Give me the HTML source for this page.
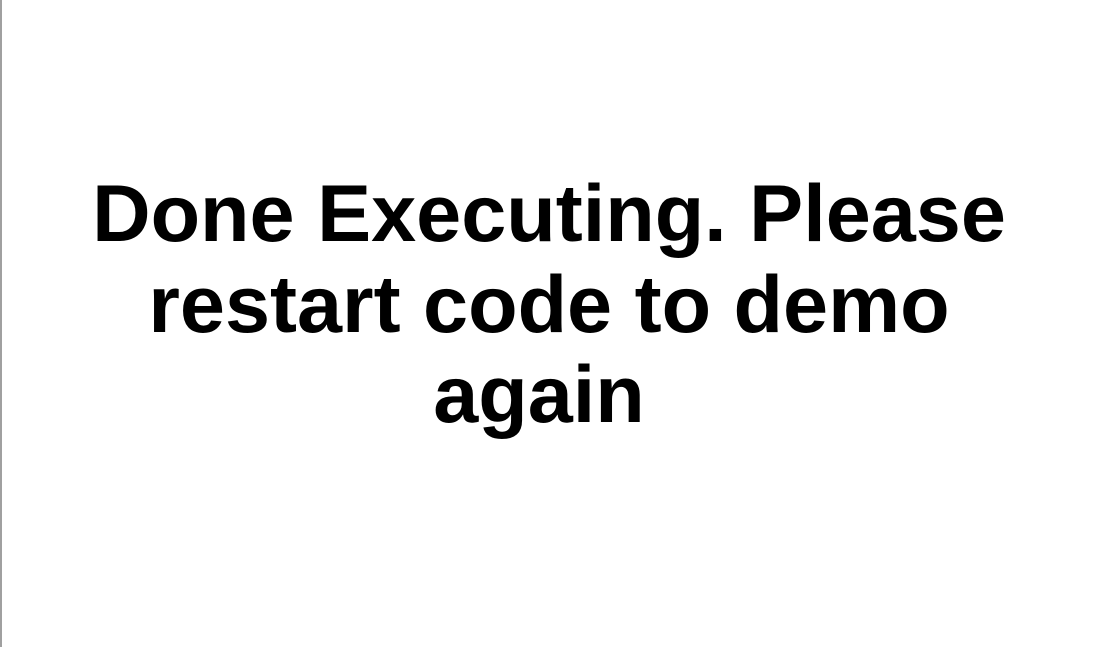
<!DOCTYPE html>
<html><head><style>
html,body{margin:0;padding:0;width:1106px;height:647px;background:#fff;overflow:hidden}
body{border-left:2px solid #a0a0a0;box-sizing:border-box}
h1{position:absolute;left:69px;width:960px;top:169px;margin:0;text-align:center;font-family:"Liberation Sans",sans-serif;font-weight:bold;font-size:81px;line-height:90.5px;color:#000}
h1 span{display:block;white-space:nowrap}
h1 .l3{position:relative;left:-10px}
</style></head><body>
<h1><span>Done Executing. Please</span><span>restart code to demo</span><span class="l3">again</span></h1>
</body></html>
